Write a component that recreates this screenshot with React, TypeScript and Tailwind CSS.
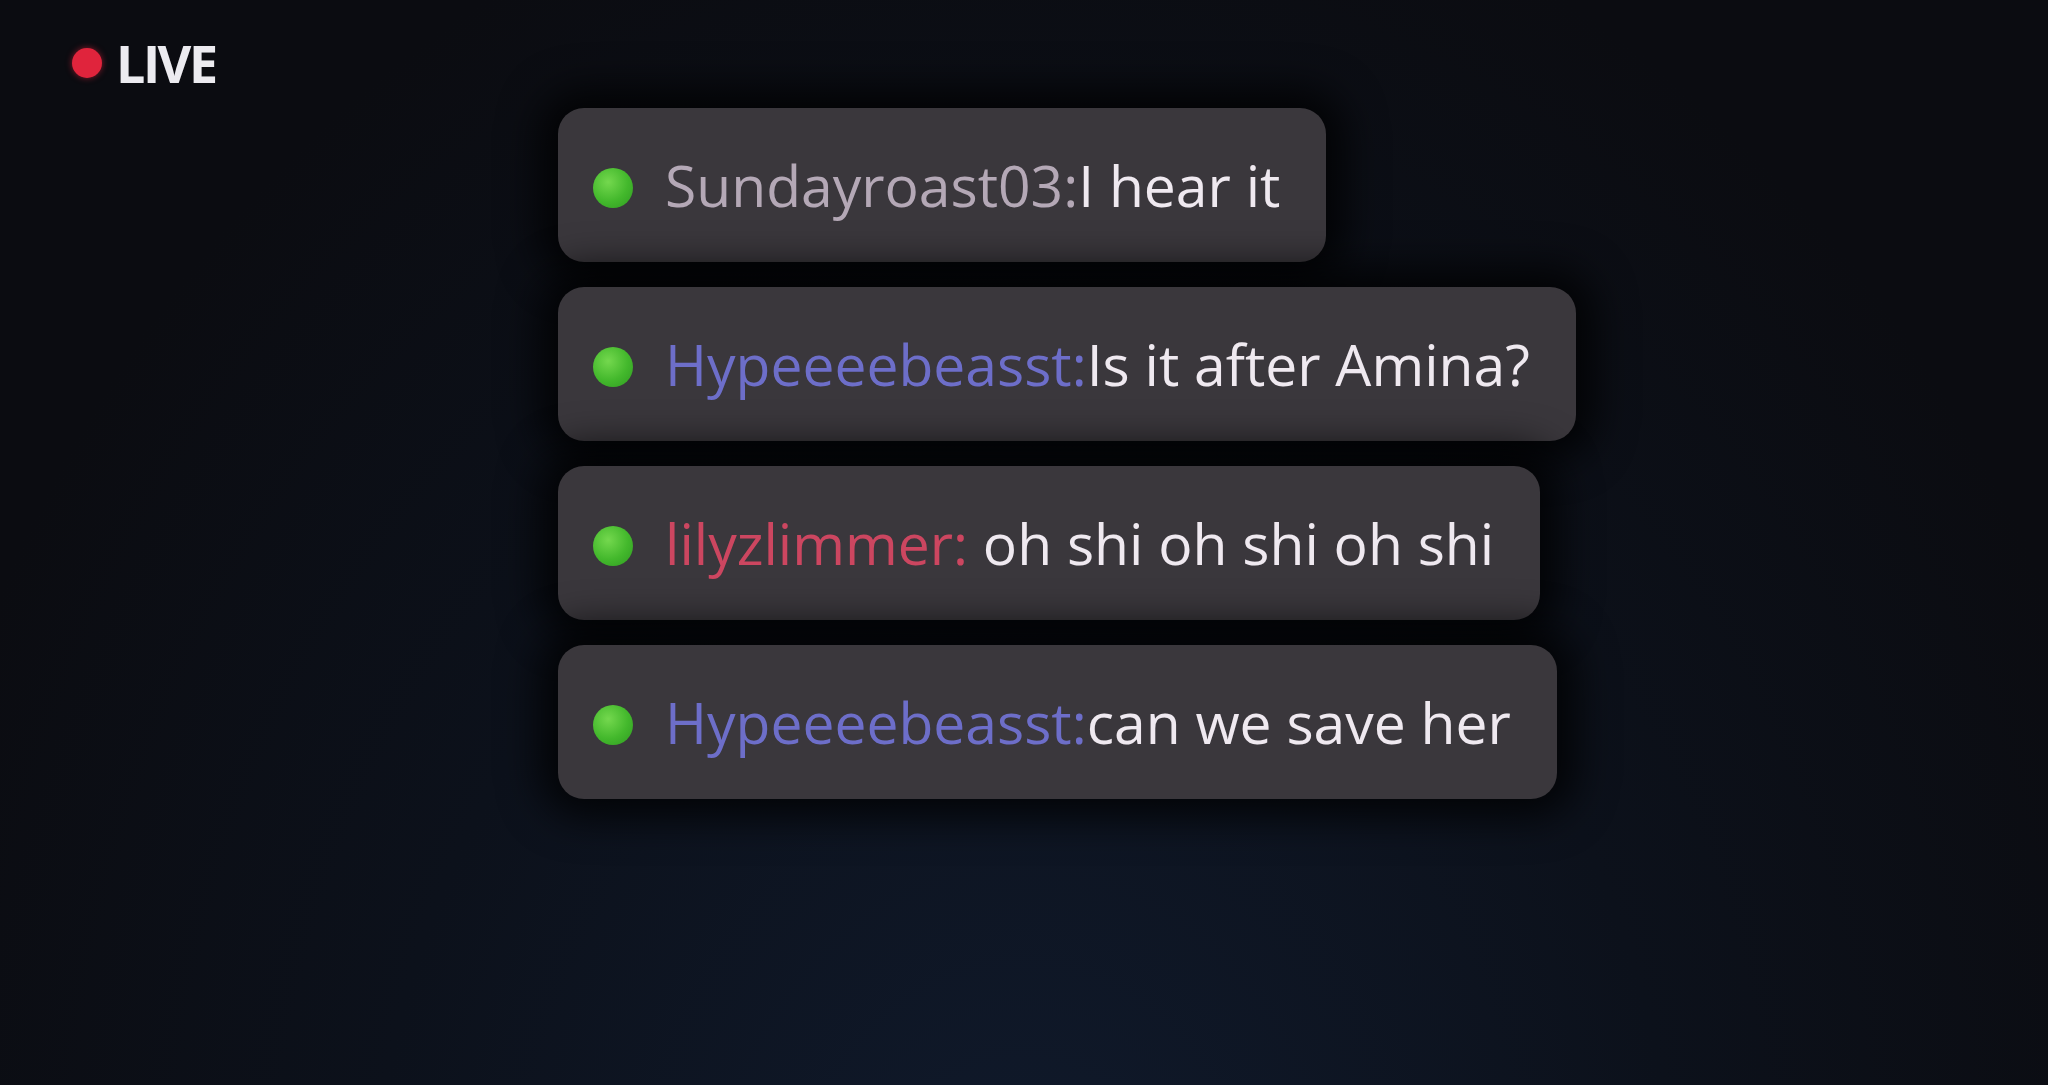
const messages = [
  { user: "Sundayroast03:", text: "I hear it", color: "text-[#b4a8b6]", space: false },
  { user: "Hypeeeebeasst:", text: "Is it after Amina?", color: "text-[#6d6ec9]", space: false },
  { user: "lilyzlimmer:", text: "oh shi oh shi oh shi", color: "text-[#cc4660]", space: true },
  { user: "Hypeeeebeasst:", text: "can we save her", color: "text-[#6d6ec9]", space: false },
];

function OnlineDot() {
  return (
    <span className="mt-[6px] h-[40px] w-[40px] shrink-0 rounded-full bg-[radial-gradient(circle_at_38%_35%,#74d84e_0%,#43b82c_55%,#2f9a22_100%)]" />
  );
}

function ChatBubble({ user, text, color, space }: (typeof messages)[number]) {
  return (
    <div className="flex h-[154px] w-fit items-center gap-[32px] rounded-[26px] bg-[#3a373c] pl-[35px] pr-[46px] shadow-[0_0_40px_18px_rgba(0,0,0,0.8)]">
      <OnlineDot />
      <p className="whitespace-pre text-[57px] font-medium leading-none">
        <span className={color}>{user}</span>
        {space ? " " : ""}
        <span className="text-[#efe9f0]">{text}</span>
      </p>
    </div>
  );
}

export default function App() {
  return (
    <main className="relative h-[1085px] w-[2048px] overflow-hidden bg-[radial-gradient(ellipse_at_50%_115%,#101a2c_0%,#0c111b_45%,#0b0c11_80%)] font-['Open_Sans','Noto_Sans',sans-serif]">
      <div className="flex items-center gap-[14px] pl-[72px] pt-[40px]">
        <span className="h-[30px] w-[30px] rounded-full bg-[#e0243c] shadow-[0_0_6px_rgba(224,36,60,0.6)]" />
        <span className="text-[52px] font-bold leading-[46px] tracking-[-2.5px] text-[#ecebf0]">LIVE</span>
      </div>

      <section className="ml-[558px] mt-[22px] flex flex-col gap-[25px]">
        {messages.map((m, i) => (
          <ChatBubble key={i} {...m} />
        ))}
      </section>
    </main>
  );
}
